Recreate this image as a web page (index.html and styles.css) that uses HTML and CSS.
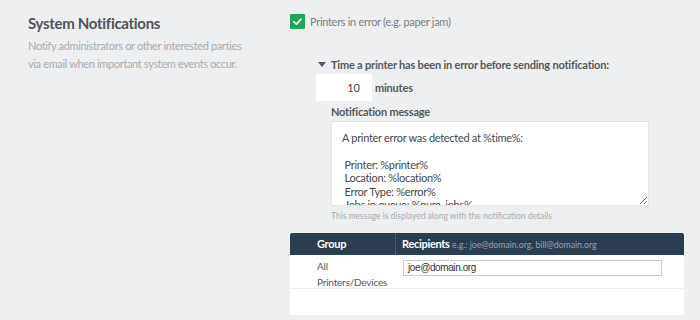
FILE: index.html
```html
<!DOCTYPE html>
<html>
<head>
<meta charset="utf-8">
<link rel="stylesheet" href="styles.css">
</head>
<body>
<div class="page">
  <div class="intro">
    <h2 class="title">System Notifications</h2>
    <p class="desc">Notify administrators or other interested parties via email when important system events occur.</p>
  </div>
  <div class="settings">
    <label class="check-row">
      <span class="checkbox"><svg viewBox="0 0 15 15" width="15" height="15"><path d="M4 7.8 L6.4 10.1 L11 5.2" fill="none" stroke="#fff" stroke-width="1.8" stroke-linecap="round" stroke-linejoin="round"/></svg></span>
      <span class="check-label">Printers in error (e.g. paper jam)</span>
    </label>
    <div class="sub">
      <div class="expander"><span class="tri"></span>Time a printer has been in error before sending notification:</div>
      <div class="minutes-row">
        <div class="num">10</div>
        <span class="unit">minutes</span>
      </div>
      <div class="message">
        <div class="msg-label">Notification message</div>
        <textarea class="msg-box" readonly>A printer error was detected at %time%:

 Printer: %printer%
 Location: %location%
 Error Type: %error%
 Jobs in queue: %num_jobs%
 Status: %status%</textarea>
        <div class="hint">This message is displayed along with the notification details</div>
      </div>
    </div>
    <div class="table">
      <div class="thead">
        <div class="th th-group">Group</div>
        <div class="th th-rec">Recipients <span class="eg">e.g.: joe@domain.org, bill@domain.org</span></div>
      </div>
      <div class="row">
        <div class="td-group">All<br>Printers/Devices</div>
        <div class="td-rec"><div class="email">joe@domain.org</div></div>
      </div>
      <div class="row empty"></div>
    </div>
  </div>
</div>
</body>
</html>
```
FILE: styles.css
```css
html, body {
  margin: 0;
  padding: 0;
  background: #eeeff1;
}
body {
  font-family: "Lato", "Liberation Sans", sans-serif;
  color: #555;
  width: 700px;
  height: 320px;
  overflow: hidden;
}
.page {
  display: flex;
}
.intro {
  width: 262px;
  padding: 12px 0 0 28px;
  flex: none;
}
.title {
  margin: 0;
  font-size: 15px;
  font-weight: 700;
  line-height: 22px;
  color: #505357;
  letter-spacing: -0.3px;
}
.desc {
  margin: 3px 0 0;
  font-size: 11px;
  line-height: 18px;
  color: #a8abaf;
  width: 220px;
  letter-spacing: -0.35px;
}
.settings {
  width: 394px;
  padding-top: 13px;
}
.check-row {
  display: flex;
  align-items: center;
  gap: 5px;
  height: 16px;
}
.checkbox {
  width: 15px;
  height: 15px;
  background: #1ea85a;
  border-radius: 1px;
  display: block;
}
.checkbox svg { display: block; }
.check-label {
  font-size: 11px;
  letter-spacing: -0.3px;
  color: #7a7d82;
}
.sub {
  padding: 28px 0 0 26px;
}
.expander {
  font-size: 11px;
  letter-spacing: -0.2px;
  font-weight: 700;
  color: #55585c;
  display: flex;
  align-items: center;
  height: 14px;
}
.tri {
  width: 0;
  height: 0;
  border-left: 4px solid transparent;
  border-right: 4px solid transparent;
  border-top: 5px solid #55585c;
  margin: 0 5px 0 2px;
}
.minutes-row {
  display: flex;
  align-items: center;
  margin-top: 3px;
  gap: 3px;
}
.num {
  width: 56px;
  height: 27px;
  background: #fff;
  box-sizing: border-box;
  text-align: right;
  padding-right: 12px;
  line-height: 27px;
  font-size: 11px;
  color: #444;
}
.unit {
  font-size: 11px;
  letter-spacing: -0.2px;
  font-weight: 700;
  color: #55585c;
}
.message {
  padding-left: 15px;
  margin-top: 4px;
}
.msg-label {
  font-size: 11px;
  letter-spacing: -0.2px;
  font-weight: 700;
  color: #55585c;
  line-height: 14px;
}
.msg-box {
  display: block;
  margin: 2px 0 0;
  width: 318px;
  height: 85px;
  box-sizing: border-box;
  border: 1px solid #e3e4e6;
  background: #fff;
  padding: 9px 10px 0;
  font-family: "Lato", "Liberation Sans", sans-serif;
  font-size: 11px;
  letter-spacing: -0.3px;
  line-height: 13.4px;
  color: #45484c;
  overflow: hidden;
  resize: vertical;
  outline: none;
}
.hint {
  font-size: 8.5px;
  color: #a8abaf;
  margin-top: 5px;
  line-height: 10px;
}
.table {
  margin-top: 12px;
  background: #fff;
}
.thead {
  display: flex;
  background: #2b3e51;
  height: 22px;
  border-radius: 2px 2px 0 0;
}
.th {
  color: #fff;
  font-weight: 700;
  font-size: 11px;
  letter-spacing: -0.3px;
  line-height: 22px;
}
.th-group {
  width: 106px;
  padding-left: 27px;
  box-sizing: border-box;
  border-right: 1px solid #4a5a6a;
}
.th-rec {
  padding-left: 6px;
}
.eg {
  font-weight: 400;
  font-size: 8.7px;
  letter-spacing: 0;
  color: #9aa3ad;
}
.row {
  display: flex;
  height: 33px;
  border-bottom: 1px solid #eceef0;
}
.row.empty {
  height: 26px;
  border-bottom: none;
}
.td-group {
  width: 113px;
  padding-left: 27px;
  box-sizing: border-box;
  font-size: 10px;
  letter-spacing: -0.2px;
  line-height: 16px;
  color: #55585c;
  padding-top: 3px;
}
.td-rec {
  padding-top: 5px;
}
.email {
  width: 259px;
  height: 16px;
  box-sizing: border-box;
  border: 1px solid #c9cbce;
  font-family: "Liberation Sans", Arial, sans-serif;
  font-size: 10px;
  letter-spacing: -0.4px;
  line-height: 14px;
  padding-left: 4px;
  color: #333;
}
```
